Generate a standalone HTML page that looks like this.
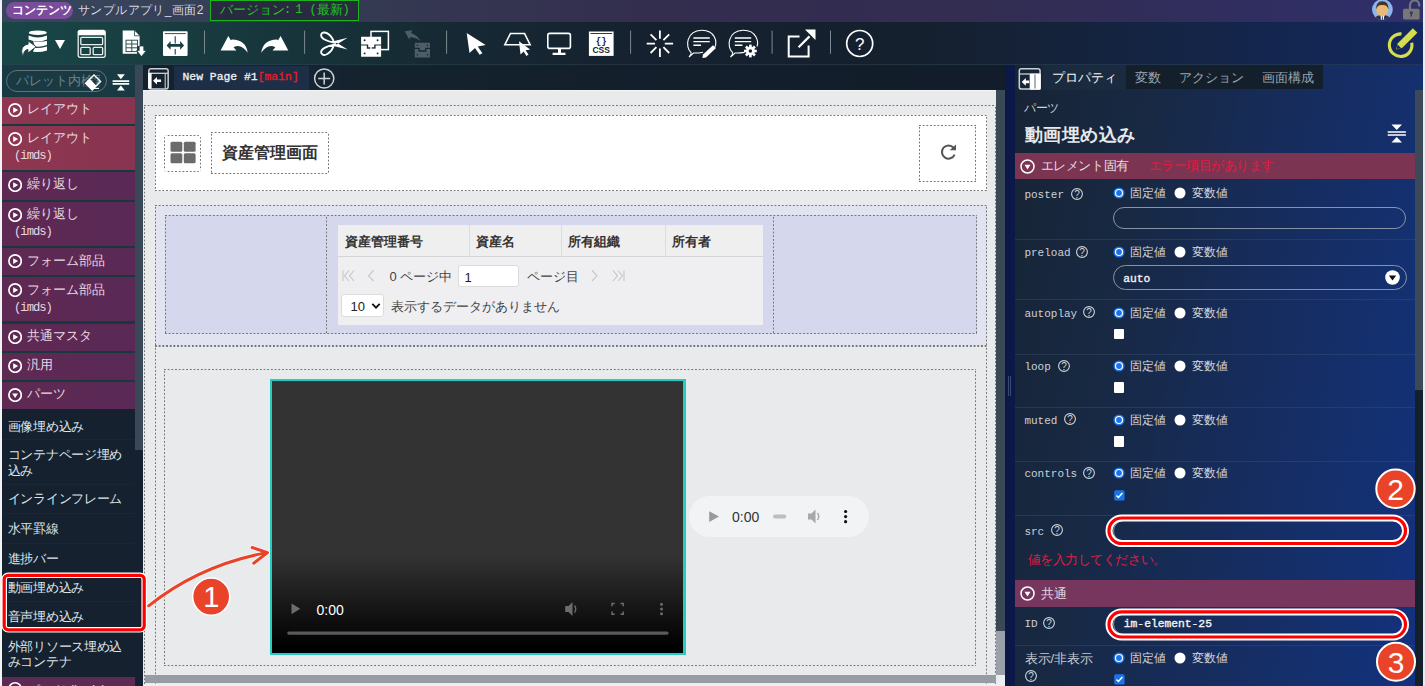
<!DOCTYPE html>
<html><head><meta charset="utf-8">
<style>
*{box-sizing:border-box;margin:0;padding:0}
html,body{width:1425px;height:686px;overflow:hidden;background:#e8eaec}
body{position:relative;font-family:"Liberation Sans",sans-serif;font-size:13px;color:#ddd}
.abs{position:absolute}
.mono{font-family:"Liberation Mono",monospace}
#topbar{left:0;top:0;width:1425px;height:22px;background:linear-gradient(90deg,#37475d 0%,#353c53 22%,#332e4e 45%,#322d52 70%,#302e62 90%,#2f2f6c 100%)}
#toolbar{left:0;top:22px;width:1425px;height:43px;background:linear-gradient(90deg,#194646 0%,#183a3e 15%,#162a34 30%,#15212f 45%,#15202f 65%,#142548 85%,#13285f 100%)}
#lefttop{left:0;top:65px;width:135px;height:31px;background:#1a3b44}
#sidebar{left:0;top:96px;width:135px;height:590px;background:#15212e}
#sbscroll{left:135px;top:65px;width:8px;height:621px;background:#152030}
#tabbar{left:143px;top:65px;width:862px;height:25px;background:linear-gradient(90deg,#14222d 0%,#14232e 25%,#13202c 55%,#121c2a 100%)}
#canvas{left:143px;top:90px;width:862px;height:596px;background:#e9eaec}
#navy{left:1005px;top:65px;width:10px;height:621px;background:#0b1848}
#rp{left:1015px;top:65px;width:410px;height:621px;background:linear-gradient(100deg,#172435 0%,#182944 28%,#162c5c 55%,#14306f 80%,#133180 100%)}
.t{position:absolute;white-space:nowrap;line-height:1}
.item{position:absolute;left:2px;width:133px;color:#e6d6dc;font-size:13px}
.dot{position:absolute;background-image:linear-gradient(90deg,#747474 40%,transparent 40%),linear-gradient(90deg,#747474 40%,transparent 40%),linear-gradient(0deg,#747474 40%,transparent 40%),linear-gradient(0deg,#747474 40%,transparent 40%);background-size:3.7px 1px,3.7px 1px,1px 3.7px,1px 3.7px;background-position:0 0,0 100%,0 0,100% 0;background-repeat:repeat-x,repeat-x,repeat-y,repeat-y}
</style></head><body>
<div id="topbar" class="abs"></div>
<div id="toolbar" class="abs"></div>
<div id="lefttop" class="abs"></div>
<div id="sidebar" class="abs"></div>
<div id="sbscroll" class="abs"></div>
<div id="tabbar" class="abs"></div>
<div id="canvas" class="abs"></div>
<div id="navy" class="abs"></div>
<div id="rp" class="abs"></div>
<div class="abs" style="left:0;top:0;width:2px;height:686px;background:#f2f3f5"></div>
<div class="abs" style="left:6px;top:2px;width:67px;height:17px;border-radius:9px;background:#7b4b9c"></div>
<div class="t" style="left:11.5px;top:4px;font-size:11.6px;font-weight:bold;color:#fff">コンテンツ</div>
<div class="t" style="left:78px;top:3.8px;font-size:12px;letter-spacing:0.4px;color:#d6d8e2">サンプルアプリ_画面2</div>
<div class="abs" style="left:210px;top:0;width:149px;height:21px;border:1px solid #1cb41c;background:#282b40"></div>
<div class="t" style="left:220px;top:3.5px;font-size:12.8px;color:#22c422">バージョン</div><div class="t mono" style="left:284px;top:4px;font-size:12px;color:#22c422">:</div><div class="t mono" style="left:295.3px;top:4px;font-size:12px;color:#22c422">1</div><div class="t mono" style="left:309.5px;top:3.5px;font-size:12px;color:#22c422">(</div><div class="t" style="left:317px;top:3.5px;font-size:12.5px;color:#22c422">最新</div><div class="t mono" style="left:342.5px;top:3.5px;font-size:12px;color:#22c422">)</div>
<div class="abs" style="left:2px;top:64px;width:1420px;height:1px;background:rgba(45,68,84,0.55)"></div><!--toolbar-line-->
<svg class="abs" style="left:0;top:0" width="1425" height="65" viewBox="0 0 1425 65">
<g fill="#fff" stroke="none">
<!-- DB icon -->
<ellipse cx="37.8" cy="32.7" rx="9" ry="2.3"/>
<path d="M28.6 35.6 Q37.8 39.5 47 35.6 V39.6 Q37.8 43.4 28.6 39.6Z"/>
<path d="M33 41.2 Q40 42.5 47 41 V45 Q40 47.5 35 46.5Z"/>
<path d="M34.5 48 Q40 48.5 47 46.6 V50.6 Q40 52.8 33 51.8Z"/>
<path d="M28.2 40.9 L36.2 46.8 L27.9 53 L28 49.5 C25.5 49.5 24 51.5 23.1 56 C20.6 52 21 45.2 28.1 44.2Z" stroke="#174444" stroke-width="0.9"/>
<path d="M55 40 H65 L60 49Z"/>
</g>
<!-- layout icon -->
<g fill="none" stroke="#e8efee" stroke-width="1.3">
<rect x="78.2" y="30.3" width="27" height="27" rx="2"/>
<rect x="80.8" y="37.3" width="21.8" height="7.4" rx="1"/>
<rect x="80.8" y="47.3" width="9.4" height="7.4" rx="1"/>
<rect x="93.2" y="47.3" width="9.4" height="7.4" rx="1"/>
</g>
<path d="M78.2 32.3 a2 2 0 0 1 2-2 h23 a2 2 0 0 1 2 2 v3 h-27z" fill="#fff"/>
<!-- doc icon -->
<path d="M122.7 30.6 H134.5 L139.6 35.8 V46 H137 V53.8 H122.7Z" fill="#fff"/>
<path d="M134.5 30.6 V35.8 H139.6" fill="none" stroke="#174444" stroke-width="0.8"/>
<g stroke="#174444" stroke-width="0.9" fill="none">
<rect x="126" y="40.2" width="11.6" height="11.4"/>
<path d="M131.8 40.2 V51.6 M126 44 H137.6 M126 47.8 H137.6"/>
</g>
<path d="M139.2 46 H143.8 V50.5 H146.4 L141.5 56.6 L136.6 50.5 H139.2Z" fill="#fff" stroke="#174444" stroke-width="0.8"/>
<!-- split icon -->
<rect x="163" y="31.2" width="24.6" height="24.7" rx="0.8" fill="#fff"/>
<path d="M164.8 33.6 H185.8" stroke="#17403f" stroke-width="0.9"/>
<path d="M175.2 36.2 V43.4 M175.2 49 V54.6" stroke="#17403f" stroke-width="1.1"/>
<path d="M166.6 45.4 L170.6 41 V44 H180.1 V41 L184.1 45.4 L180.1 49.8 V46.8 H170.6 V49.8Z" fill="#17403f"/>
<!-- separators -->
<g stroke="#7a8a90" stroke-width="1">
<path d="M204.5 30.6 V53.8 M304.6 30.6 V53.8 M446.6 30.6 V53.8 M630.6 30.6 V53.8 M772.1 30.6 V53.8 M830.5 30.6 V53.8"/>
</g>
<!-- undo -->
<path d="M228.3 35.9 L220.6 50.6 H236.4 L233.5 47.2 Q241 43 247.6 52.7 Q246 40 232 39.6 L230.8 40.2Z" fill="#fff"/>
<!-- redo -->
<path d="M280.6 35.9 L288.3 50.6 H272.5 L275.4 47.2 Q267.9 43 261.3 52.7 Q262.9 40 276.9 39.6 L278.1 40.2Z" fill="#fff"/>
<!-- scissors -->
<g fill="none" stroke="#fff" stroke-width="1.9">
<path d="M334 42.6 C331.5 33.5 323 30 321.3 34.2 C320 38.5 327 41.2 334 42.6Z"/>
<path d="M334 44.8 C331.5 53.9 323 57.4 321.3 53.2 C320 48.9 327 46.2 334 44.8Z"/>
</g>
<path d="M332.5 41.6 L347.6 37.8 L336.8 44.6Z M332.5 45.8 L347.6 49.6 L336.8 42.8Z" fill="#fff"/>
<!-- copy -->
<rect x="371" y="31.4" width="17.4" height="18.2" fill="none" stroke="#fff" stroke-width="1.5"/>
<path d="M361.1 36.8 H381.1 V44.4 H374.2 V47.2 H368.2 V44.4 H361.1Z M361.1 45.6 H366.8 V48.8 H375.6 V45.6 H381.1 V56.8 H361.1Z" fill="#fff"/>
<g fill="#17222e"><circle cx="364.6" cy="40.2" r="0.95"/><circle cx="377.6" cy="40.2" r="0.95"/><circle cx="364.6" cy="53.4" r="0.95"/><circle cx="377.6" cy="53.4" r="0.95"/></g>
<!-- paste disabled -->
<path d="M404.7 31.2 L412.3 30.2 L411.2 33 Q417.8 35.8 420.6 40.8 Q416 37.8 410.4 37 L409.2 39.4Z" fill="#4d5d6a"/>
<path d="M414.8 42.7 H430 V47.8 H425 V50.2 H419.8 V47.8 H414.8Z M414.8 49 H418.4 V51.8 H426.4 V49 H430 V57.4 H414.8Z" fill="#4d5d6a"/>
<g fill="#17222e"><circle cx="417.4" cy="45.2" r="0.8"/><circle cx="427.4" cy="45.2" r="0.8"/><circle cx="417.4" cy="54.8" r="0.8"/><circle cx="427.4" cy="54.8" r="0.8"/></g>
<!-- pointer -->
<path d="M466.7 32.9 L485.6 45 L477.8 46.4 L482.4 53.2 L479.6 54.8 L475 48 L469.5 53Z" fill="#fff"/>
<!-- trapezoid pointer -->
<path d="M510.4 33.6 H524.6 L530.2 44.8 H504.8Z" fill="none" stroke="#fff" stroke-width="1.5"/>
<path d="M519 41.3 L530.2 49.5 L525.6 50.2 L528.5 54.4 L526.4 55.9 L523.6 51.5 L520.5 54.6Z" fill="#fff"/>
<!-- monitor -->
<rect x="547.8" y="33.4" width="22.6" height="15" rx="2" fill="none" stroke="#fff" stroke-width="1.6"/>
<path d="M558 48.6 H561 V52.8 H558Z M552.6 52.8 H565.5 V55.1 H552.6Z" fill="#fff"/>
<!-- css -->
<rect x="588.9" y="31.5" width="24.7" height="24.4" fill="#fff"/>
<path d="M590.4 33.5 H612.1" stroke="#17222e" stroke-width="0.9"/>
<text x="601.2" y="44.4" font-family="Liberation Mono" font-weight="bold" font-size="9.5" fill="#17222e" text-anchor="middle" textLength="11" lengthAdjust="spacingAndGlyphs">{}</text>
<text x="601.2" y="53.4" font-family="Liberation Sans" font-weight="bold" font-size="8.4" fill="#17222e" text-anchor="middle" textLength="17.5" lengthAdjust="spacingAndGlyphs">CSS</text>
<!-- spinner -->
<g stroke="#fff" stroke-width="1.8" stroke-linecap="butt">
<path d="M659.9 30.5 V38.8 M659.9 48.6 V56.9 M646.7 43.7 H655 M664.8 43.7 H673.1 M650.6 34.4 L656.4 40.2 M663.4 47.2 L669.2 53 M669.2 34.4 L663.4 40.2 M656.4 47.2 L650.6 53"/>
</g>
<!-- chat pen -->
<path d="M691 52.5 C685 47 686 31 701.5 30.2 C716 30 717 43 714.8 47 M703 52.2 C699 53 696 53.2 693.5 53 L689 57 C690.5 55 691.5 53 691 52.5" fill="none" stroke="#fff" stroke-width="1.1"/>
<g stroke="#fff" stroke-width="1.4"><path d="M693.4 38 H709.8 M693.4 41.6 H709.8 M693.4 45.2 H701"/></g>
<path d="M713 45.2 L716 48 L706 57.5 L702.4 58 L703 54.6Z" fill="#fff"/>
<!-- chat gear -->
<path d="M732.5 52.5 C726.5 47 727.5 31 743 30.2 C757.5 30 758.5 43 757 46.5 M744.5 52.4 C740.5 53 737.5 53.2 735 53 L730.5 57 C732 55 733 53 732.5 52.5" fill="none" stroke="#fff" stroke-width="1.1"/>
<g stroke="#fff" stroke-width="1.4"><path d="M734.8 38 H751.2 M734.8 41.6 H751.2 M734.8 45.2 H742.4"/></g>
<g transform="translate(750.4 51)">
<circle r="4.4" fill="#fff"/>
<g fill="#fff"><rect x="-1.3" y="-6.4" width="2.6" height="12.8"/><rect x="-1.3" y="-6.4" width="2.6" height="12.8" transform="rotate(45)"/><rect x="-1.3" y="-6.4" width="2.6" height="12.8" transform="rotate(90)"/><rect x="-1.3" y="-6.4" width="2.6" height="12.8" transform="rotate(135)"/></g>
<circle r="1.8" fill="#17222e"/>
</g>
<!-- external -->
<path d="M799.5 36.5 H788.7 V56.4 H808.6 V45.5" fill="none" stroke="#fff" stroke-width="2"/>
<path d="M798.6 47.3 L809.5 36.4" stroke="#fff" stroke-width="2.2"/>
<path d="M805 29.6 H815.5 V40.1Z" fill="#fff"/>
<!-- help -->
<circle cx="859.7" cy="43.5" r="13" fill="none" stroke="#fff" stroke-width="1.7"/>
<text x="859.7" y="49.5" font-family="Liberation Sans" font-size="17" fill="#fff" text-anchor="middle">?</text>
<!-- edit icon right -->
<path d="M1401.5 33.9 A11.3 11.3 0 1 0 1411.7 42.8" fill="none" stroke="#d5dc4e" stroke-width="3.1"/>
<path d="M1396.2 49.5 L1397.8 43.3 L1412.9 28.2 L1417.4 32.7 L1402.3 47.8Z" fill="#d5dc4e"/>
<path d="M1397.6 44.6 L1401.2 48.2 L1396.8 49Z" fill="#112a5a"/>
</svg>
<div class="abs" style="left:2px;top:65px;width:133px;height:31px;background:#1a3a43"></div>
<div class="abs" style="left:6px;top:70px;width:101px;height:21.5px;border:1px solid #5f7378;border-radius:11px"></div>
<div class="abs" style="left:8px;top:70px;width:92px;height:21px;overflow:hidden"><div class="t" style="left:8px;top:3.5px;font-size:13px;color:#6f8286">パレット内検索</div></div>
<svg class="abs" style="left:84px;top:73px" width="18" height="18" viewBox="0 0 18 18"><path d="M1.6 10.3 L10 1.9 L16.6 8.5 L8.2 16.9Z" fill="none" stroke="#fff" stroke-width="1.4"/><path d="M1.6 10.3 L5.8 6.1 L12.4 12.7 L8.2 16.9Z" fill="#fff"/><path d="M7.8 15.4 H15" stroke="#fff" stroke-width="1.1"/></svg>
<svg class="abs" style="left:111.5px;top:73.5px" width="18" height="17" viewBox="0 0 18 17"><path d="M5 0.3 H12.8 L8.9 5.2Z M5 16.6 H12.8 L8.9 11.6Z" fill="#fff"/><path d="M0.6 7.2 H17.2 M0.6 9.9 H17.2" stroke="#fff" stroke-width="1.7"/></svg>
<div class="abs" style="left:2px;top:96px;width:133px;height:313px;background:#17393e"></div>
<div class="abs" style="left:2px;top:96.5px;width:132.5px;height:27.2px;background:linear-gradient(90deg,#8f3750,#883450)"></div>
<svg class="abs" style="left:8px;top:102.5px" width="14.2" height="14.2" viewBox="0 0 14.2 14.2"><circle cx="7.1" cy="7.1" r="6.2" fill="none" stroke="#fff" stroke-width="1.7"/><path d="M5.2 4.2 L10.2 7.1 L5.2 10Z" fill="#fff"/></svg>
<div class="t" style="left:27px;top:101.9px;font-size:13px;color:#ead8e0">レイアウト</div>
<div class="abs" style="left:2px;top:125.8px;width:132.5px;height:44.4px;background:linear-gradient(90deg,#8f3750,#883450)"></div>
<svg class="abs" style="left:8px;top:131.8px" width="14.2" height="14.2" viewBox="0 0 14.2 14.2"><circle cx="7.1" cy="7.1" r="6.2" fill="none" stroke="#fff" stroke-width="1.7"/><path d="M5.2 4.2 L10.2 7.1 L5.2 10Z" fill="#fff"/></svg>
<div class="t" style="left:27px;top:131.2px;font-size:13px;color:#ead8e0">レイアウト</div>
<div class="t mono" style="left:14px;top:150.4px;font-size:12.2px;letter-spacing:-1px;color:#ead8e0">(imds)</div>
<div class="abs" style="left:2px;top:172px;width:132.5px;height:27.8px;background:linear-gradient(90deg,#5f2953,#5a2956)"></div>
<svg class="abs" style="left:8px;top:178.0px" width="14.2" height="14.2" viewBox="0 0 14.2 14.2"><circle cx="7.1" cy="7.1" r="6.2" fill="none" stroke="#fff" stroke-width="1.7"/><path d="M5.2 4.2 L10.2 7.1 L5.2 10Z" fill="#fff"/></svg>
<div class="t" style="left:27px;top:177.4px;font-size:13px;color:#ead8e0">繰り返し</div>
<div class="abs" style="left:2px;top:201.8px;width:132.5px;height:44.4px;background:linear-gradient(90deg,#5f2953,#5a2956)"></div>
<svg class="abs" style="left:8px;top:207.8px" width="14.2" height="14.2" viewBox="0 0 14.2 14.2"><circle cx="7.1" cy="7.1" r="6.2" fill="none" stroke="#fff" stroke-width="1.7"/><path d="M5.2 4.2 L10.2 7.1 L5.2 10Z" fill="#fff"/></svg>
<div class="t" style="left:27px;top:207.2px;font-size:13px;color:#ead8e0">繰り返し</div>
<div class="t mono" style="left:14px;top:226.4px;font-size:12.2px;letter-spacing:-1px;color:#ead8e0">(imds)</div>
<div class="abs" style="left:2px;top:248.3px;width:132.5px;height:27.0px;background:linear-gradient(90deg,#5f2953,#5a2956)"></div>
<svg class="abs" style="left:8px;top:254.3px" width="14.2" height="14.2" viewBox="0 0 14.2 14.2"><circle cx="7.1" cy="7.1" r="6.2" fill="none" stroke="#fff" stroke-width="1.7"/><path d="M5.2 4.2 L10.2 7.1 L5.2 10Z" fill="#fff"/></svg>
<div class="t" style="left:27px;top:253.7px;font-size:13px;color:#ead8e0">フォーム部品</div>
<div class="abs" style="left:2px;top:277.3px;width:132.5px;height:44.2px;background:linear-gradient(90deg,#5f2953,#5a2956)"></div>
<svg class="abs" style="left:8px;top:283.3px" width="14.2" height="14.2" viewBox="0 0 14.2 14.2"><circle cx="7.1" cy="7.1" r="6.2" fill="none" stroke="#fff" stroke-width="1.7"/><path d="M5.2 4.2 L10.2 7.1 L5.2 10Z" fill="#fff"/></svg>
<div class="t" style="left:27px;top:282.7px;font-size:13px;color:#ead8e0">フォーム部品</div>
<div class="t mono" style="left:14px;top:301.9px;font-size:12.2px;letter-spacing:-1px;color:#ead8e0">(imds)</div>
<div class="abs" style="left:2px;top:323.5px;width:132.5px;height:27.5px;background:linear-gradient(90deg,#5f2953,#5a2956)"></div>
<svg class="abs" style="left:8px;top:329.5px" width="14.2" height="14.2" viewBox="0 0 14.2 14.2"><circle cx="7.1" cy="7.1" r="6.2" fill="none" stroke="#fff" stroke-width="1.7"/><path d="M5.2 4.2 L10.2 7.1 L5.2 10Z" fill="#fff"/></svg>
<div class="t" style="left:27px;top:328.9px;font-size:13px;color:#ead8e0">共通マスタ</div>
<div class="abs" style="left:2px;top:353px;width:132.5px;height:27.0px;background:linear-gradient(90deg,#5f2953,#5a2956)"></div>
<svg class="abs" style="left:8px;top:359.0px" width="14.2" height="14.2" viewBox="0 0 14.2 14.2"><circle cx="7.1" cy="7.1" r="6.2" fill="none" stroke="#fff" stroke-width="1.7"/><path d="M5.2 4.2 L10.2 7.1 L5.2 10Z" fill="#fff"/></svg>
<div class="t" style="left:27px;top:358.4px;font-size:13px;color:#ead8e0">汎用</div>
<div class="abs" style="left:2px;top:382px;width:132.5px;height:27.0px;background:linear-gradient(90deg,#5f2953,#5a2956)"></div>
<svg class="abs" style="left:8px;top:388.0px" width="14.2" height="14.2" viewBox="0 0 14.2 14.2"><circle cx="7.1" cy="7.1" r="6.2" fill="none" stroke="#fff" stroke-width="1.7"/><path d="M4.2 5.4 L10 5.4 L7.1 10Z" fill="#fff"/></svg>
<div class="t" style="left:27px;top:387.4px;font-size:13px;color:#ead8e0">パーツ</div>
<div class="t" style="left:7.8px;top:419.5px;font-size:13px;letter-spacing:-0.3px;color:#dfe3ea">画像埋め込み</div>
<div class="t" style="left:7.8px;top:448.0px;font-size:13px;letter-spacing:-0.3px;color:#dfe3ea">コンテナページ埋め</div>
<div class="t" style="left:7.8px;top:463.5px;font-size:13px;letter-spacing:-0.3px;color:#dfe3ea">込み</div>
<div class="t" style="left:7.8px;top:492.0px;font-size:13px;letter-spacing:-0.3px;color:#dfe3ea">インラインフレーム</div>
<div class="t" style="left:7.8px;top:522.0px;font-size:13px;letter-spacing:-0.3px;color:#dfe3ea">水平罫線</div>
<div class="t" style="left:7.8px;top:551.5px;font-size:13px;letter-spacing:-0.3px;color:#dfe3ea">進捗バー</div>
<div class="t" style="left:7.8px;top:581.0px;font-size:13px;letter-spacing:-0.3px;color:#dfe3ea">動画埋め込み</div>
<div class="t" style="left:7.8px;top:610.0px;font-size:13px;letter-spacing:-0.3px;color:#dfe3ea">音声埋め込み</div>
<div class="t" style="left:7.8px;top:639.5px;font-size:13px;letter-spacing:-0.3px;color:#dfe3ea">外部リソース埋め込</div>
<div class="t" style="left:7.8px;top:655.0px;font-size:13px;letter-spacing:-0.3px;color:#dfe3ea">みコンテナ</div>
<div class="abs" style="left:2px;top:439.4px;width:133px;height:1px;background:rgba(255,255,255,0.025)"></div>
<div class="abs" style="left:2px;top:484px;width:133px;height:1px;background:rgba(255,255,255,0.025)"></div>
<div class="abs" style="left:2px;top:513.4px;width:133px;height:1px;background:rgba(255,255,255,0.025)"></div>
<div class="abs" style="left:2px;top:542.8px;width:133px;height:1px;background:rgba(255,255,255,0.025)"></div>
<div class="abs" style="left:2px;top:572px;width:133px;height:1px;background:rgba(255,255,255,0.025)"></div>
<div class="abs" style="left:2px;top:601px;width:133px;height:1px;background:rgba(255,255,255,0.025)"></div>
<div class="abs" style="left:2px;top:630px;width:133px;height:1px;background:rgba(255,255,255,0.025)"></div>
<div class="abs" style="left:2px;top:676.7px;width:132.5px;height:12px;background:#5c2a55"></div>
<svg class="abs" style="left:8px;top:682.4px" width="14.2" height="14.2" viewBox="0 0 14.2 14.2"><circle cx="7.1" cy="7.1" r="6.3" fill="none" stroke="#fff" stroke-width="1.5"/></svg>
<div class="t" style="left:27px;top:682.5px;font-size:13px;color:#ead8e0">パーツ (imds)</div>
<div class="abs" style="left:135px;top:65px;width:8px;height:384.5px;background:#394756"></div>
<!-- tab bar -->
<svg class="abs" style="left:147px;top:67px" width="23" height="23" viewBox="0 0 23 23">
<rect x="1.85" y="1.65" width="19.3" height="20.3" rx="2.2" fill="none" stroke="#cdd1d6" stroke-width="1.5"/>
<path d="M1.85 6.3 H21.15" stroke="#cdd1d6" stroke-width="1.3"/>
<rect x="1.1" y="6" width="3.5" height="15.6" fill="#fff"/>
<path d="M18.2 6.3 V21.4" stroke="#c8ccd2" stroke-width="1.1"/>
<path d="M6 13.8 L10 10 V12.5 H14.1 V15.1 H10 V17.6Z" fill="#fff"/>
</svg>
<div class="abs" style="left:173.7px;top:65.5px;width:135.4px;height:24px;background:#1d2f47"></div>
<div class="t mono" style="left:182.5px;top:71.8px;font-size:11.4px;color:#f2f2f2;-webkit-text-stroke:0.3px #f2f2f2">New Page #1<span style="color:#e4202a;-webkit-text-stroke:0.3px #e4202a">[main]</span></div>
<div class="abs" style="left:309px;top:65.5px;width:31px;height:24px;background:#152430"></div>
<svg class="abs" style="left:313px;top:67px" width="23" height="23" viewBox="0 0 23 23"><circle cx="11.2" cy="11.5" r="9.6" fill="none" stroke="#cdd2d8" stroke-width="1.5"/><path d="M11.2 5.5 V17.5 M5.2 11.5 H17.2" stroke="#cdd2d8" stroke-width="1.5"/></svg>
<!-- canvas -->
<div class="abs" style="left:143px;top:90px;width:853px;height:1.2px;background:#f4f5f6"></div>
<div class="dot" style="left:144px;top:104.8px;width:851.5px;height:580px;background-color:transparent"></div>
<!-- header -->
<div class="dot" style="left:154.7px;top:115px;width:832.3px;height:76.4px;background-color:#fff"></div>
<div class="dot" style="left:164.3px;top:134.5px;width:37px;height:37.3px;border-radius:4px"></div>
<svg class="abs" style="left:170px;top:141px" width="27" height="23" viewBox="0 0 27 23">
<g fill="#6b6b6b"><rect x="0.5" y="0.7" width="11.8" height="10" rx="1.5"/><rect x="13.8" y="0.7" width="11.8" height="10" rx="1.5"/><rect x="0.5" y="12.3" width="11.8" height="10" rx="1.5"/><rect x="13.8" y="12.3" width="11.8" height="10" rx="1.5"/></g></svg>
<div class="dot" style="left:210.7px;top:132px;width:118.3px;height:42px"></div>
<div class="t" style="left:221.5px;top:145px;font-size:16px;font-weight:bold;color:#333">資産管理画面</div>
<div class="dot" style="left:919.3px;top:124.6px;width:57.2px;height:57px"></div>
<svg class="abs" style="left:938px;top:142px" width="20" height="20" viewBox="0 0 20 20"><path d="M15.6 5.8 A6.6 6.6 0 1 0 16.6 12.6" fill="none" stroke="#555" stroke-width="2"/><path d="M11.6 8.3 H18 V2.4Z" fill="#555"/></svg>
<!-- table section -->
<div class="dot" style="left:155px;top:204.9px;width:832px;height:141px;background-color:#e1e3f0"></div>
<div class="dot" style="left:164.5px;top:215.4px;width:812px;height:118.8px;background-color:#d5d8ed"></div>
<div class="dot" style="left:326px;top:215.4px;width:447.5px;height:118.8px;background-image:linear-gradient(0deg,#747474 40%,transparent 40%),linear-gradient(0deg,#747474 40%,transparent 40%);background-size:1px 3.7px,1px 3.7px;background-position:0 0,100% 0;background-repeat:repeat-y,repeat-y"></div>
<div class="abs" style="left:337.8px;top:225px;width:425px;height:99.8px;background:#efeff1"></div>
<div class="abs" style="left:337.8px;top:225px;width:425px;height:32px;background:#efefef;border-bottom:1.2px solid #d4d4d6"></div>
<div class="abs" style="left:469px;top:225px;width:1px;height:32px;background:#dcdcde"></div>
<div class="abs" style="left:561px;top:225px;width:1px;height:32px;background:#dcdcde"></div>
<div class="abs" style="left:665px;top:225px;width:1px;height:32px;background:#dcdcde"></div>
<div class="t" style="left:344.6px;top:234.5px;font-size:13px;font-weight:bold;color:#333">資産管理番号</div>
<div class="t" style="left:476px;top:234.5px;font-size:13px;font-weight:bold;color:#333">資産名</div>
<div class="t" style="left:568.2px;top:234.5px;font-size:13px;font-weight:bold;color:#333">所有組織</div>
<div class="t" style="left:672.4px;top:234.5px;font-size:13px;font-weight:bold;color:#333">所有者</div>
<svg class="abs" style="left:340px;top:268px" width="290" height="16" viewBox="0 0 290 16">
<g fill="none" stroke="#c6c6ca" stroke-width="1.1">
<path d="M3 2.5 V13 M9 2.5 L4.5 7.8 L9 13 M14 2.5 L9.5 7.8 L14 13"/>
<path d="M33.5 2.5 L28.5 7.8 L33.5 13"/>
<path d="M252 2.5 L257 7.8 L252 13"/>
<path d="M273 2.5 L277.5 7.8 L273 13 M278 2.5 L282.5 7.8 L278 13 M284 2.5 V13"/>
</g></svg>
<div class="t" style="left:389.5px;top:270px;font-size:13px;color:#444">0 ページ中</div>
<div class="abs" style="left:457.8px;top:264.5px;width:61.3px;height:22.8px;background:#fff;border:1px solid #dcdcdc;border-radius:3px"></div>
<div class="t" style="left:464.5px;top:270.5px;font-size:13px;color:#222">1</div>
<div class="t" style="left:526.6px;top:270px;font-size:13px;color:#444">ページ目</div>
<div class="abs" style="left:340.6px;top:293.6px;width:43.2px;height:23.9px;background:#fff;border:1px solid #dcdcdc;border-radius:3px"></div>
<div class="t" style="left:350.5px;top:300px;font-size:13px;color:#222">10</div>
<svg class="abs" style="left:371px;top:302px" width="10" height="8" viewBox="0 0 10 8"><path d="M1.3 1.8 L5 5.6 L8.7 1.8" fill="none" stroke="#111" stroke-width="1.8"/></svg>
<div class="t" style="left:390.9px;top:299.5px;font-size:13px;color:#444">表示するデータがありません</div>
<!-- video section -->
<div class="dot" style="left:155px;top:345.8px;width:831.6px;height:340px"></div>
<div class="dot" style="left:164.2px;top:368.7px;width:811.7px;height:297.1px"></div>
<div class="abs" style="left:269.7px;top:378.8px;width:416.2px;height:276.5px;background:#1fd0c2"></div>
<div class="abs" style="left:272.2px;top:381.2px;width:411.2px;height:271.5px;background:linear-gradient(180deg,#333 0%,#333 64%,#000 98%)"></div>
<svg class="abs" style="left:272px;top:595px" width="412" height="45" viewBox="0 0 412 45">
<path d="M19.5 8.4 L28.3 13.8 L19.5 19.2Z" fill="#6c6c6c"/>
<rect x="15.2" y="36.4" width="381.4" height="3.4" rx="1.7" fill="#5a5a5a"/>
<path d="M293.2 11 H296.5 L300.5 7 V21 L296.5 17 H293.2Z" fill="#6c6c6c"/>
<path d="M302.5 10.5 Q305 14 302.5 17.5" fill="none" stroke="#6c6c6c" stroke-width="1.4"/>
<path d="M340 11.3 V8.5 H342.8 M348.5 8.5 H351.2 V11.3 M351.2 16.6 V19.3 H348.5 M342.8 19.3 H340 V16.6" fill="none" stroke="#6c6c6c" stroke-width="1.5"/>
<g fill="#6c6c6c"><circle cx="389.5" cy="9.2" r="1.5"/><circle cx="389.5" cy="14" r="1.5"/><circle cx="389.5" cy="18.8" r="1.5"/></g>
</svg>
<div class="t" style="left:316.5px;top:603px;font-size:14px;color:#fff">0:00</div>
<div class="abs" style="left:688.5px;top:496.3px;width:180.2px;height:40.9px;background:#f1f3f4;border-radius:20.5px"></div>
<svg class="abs" style="left:688.5px;top:496.3px" width="181" height="41" viewBox="0 0 181 41">
<path d="M20.2 15.2 L30 20.6 L20.2 26Z" fill="#9a9a9a"/>
<rect x="84" y="18.6" width="13.2" height="4" rx="2" fill="#bdbdbd"/>
<path d="M119 17.5 H122.5 L126.5 13.5 V27.5 L122.5 23.5 H119Z" fill="#a8a8a8"/>
<path d="M128.5 17 Q131 20.5 128.5 24" fill="none" stroke="#a8a8a8" stroke-width="1.4"/>
<g fill="#111"><circle cx="156.6" cy="15.5" r="1.6"/><circle cx="156.6" cy="20.6" r="1.6"/><circle cx="156.6" cy="25.7" r="1.6"/></g>
</svg>
<div class="t" style="left:732px;top:510px;font-size:14px;color:#333">0:00</div>
<!-- canvas scrollbars -->
<div class="abs" style="left:996.3px;top:90px;width:8.7px;height:541px;background:#3b4856"></div>
<div class="abs" style="left:996.3px;top:631px;width:8.7px;height:44px;background:#9aa1a9"></div>
<div class="abs" style="left:996.3px;top:675px;width:8.7px;height:8.5px;background:#ecedef"></div>
<div class="abs" style="left:144.5px;top:675.3px;width:851.8px;height:8.2px;background:#959ca4"></div>
<div class="abs" style="left:143px;top:683.5px;width:862px;height:2.5px;background:#eceef0"></div>
<svg class="abs" style="left:1017.6px;top:67.8px" width="23" height="23" viewBox="0 0 23 23"><rect x="1.3" y="0.8" width="20.8" height="20.3" rx="2.2" fill="none" stroke="#cdd1d6" stroke-width="1.5"/><path d="M1.3 6 H22.1" stroke="#cdd1d6" stroke-width="1.3"/><rect x="11.7" y="5.8" width="11.1" height="16" rx="1" fill="#fff"/><path d="M17 6.5 V20.6" stroke="#8a929c" stroke-width="1.4"/><path d="M3.7 13.9 L7.8 10 V12.5 H11.2 V15.3 H7.8 V17.8Z" fill="#fff"/></svg>
<div class="abs" style="left:1043px;top:65px;width:82.6px;height:25px;background:#1b2b3f"></div>
<div class="t" style="left:1052px;top:70.5px;font-size:13px;color:#f4f4f4">プロパティ</div>
<div class="abs" style="left:1126px;top:65.4px;width:197px;height:24.1px;background:#141f2c"></div>
<div class="t" style="left:1135px;top:70.5px;font-size:13px;color:#9ba5b0">変数</div>
<div class="t" style="left:1179.2px;top:70.5px;font-size:13px;color:#9ba5b0">アクション</div>
<div class="t" style="left:1262px;top:70.5px;font-size:13px;color:#9ba5b0">画面構成</div>
<div class="t" style="left:1024.3px;top:102px;font-size:12px;letter-spacing:-0.6px;color:#d0d4da">パーツ</div>
<div class="t" style="left:1024.5px;top:125.5px;font-size:18px;letter-spacing:0.5px;font-weight:bold;color:#e8e8ea">動画埋め込み</div>
<svg class="abs" style="left:1387px;top:124px" width="20" height="19" viewBox="0 0 20 19"><path d="M4.5 0.5 H15 L9.75 6Z M4.5 18.5 H15 L9.75 13Z" fill="#fff"/><path d="M0.7 8 H18.9 M0.7 11 H18.9" stroke="#fff" stroke-width="1.6"/></svg>
<div class="abs" style="left:1015px;top:153px;width:400px;height:26.3px;background:#7b3451"></div>
<svg class="abs" style="left:1019.8px;top:158.6px" width="15" height="15" viewBox="0 0 15 15"><circle cx="7.5" cy="7.5" r="6.5" fill="none" stroke="#fff" stroke-width="1.5"/><path d="M4.5 5.7 L10.5 5.7 L7.5 10.5Z" fill="#fff"/></svg>
<div class="t" style="left:1040.5px;top:158.5px;font-size:13px;letter-spacing:-0.35px;color:#e0dce0">エレメント固有</div>
<div class="t" style="left:1148.5px;top:158.5px;font-size:13px;letter-spacing:-0.45px;color:#e41a40">エラー項目があります</div>
<div class="t mono" style="left:1024.4px;top:190.0px;font-size:11px;color:#ccd0d8">poster</div><svg class="abs" style="left:1070.7px;top:187.7px" width="12" height="12" viewBox="0 0 12 12"><circle cx="6" cy="6" r="5.4" fill="none" stroke="#d0d4da" stroke-width="1.1"/><text x="6" y="9.6" font-family="Liberation Sans" font-size="10" fill="#d0d4da" text-anchor="middle">?</text></svg>
<svg class="abs" style="left:1112.7px;top:187.4px" width="12" height="12" viewBox="0 0 12 12"><circle cx="6" cy="6" r="5.6" fill="#1a73e8"/><circle cx="6" cy="6" r="4.1" fill="#fff"/><circle cx="6" cy="6" r="2.9" fill="#1a73e8"/></svg><div class="t" style="left:1130.3px;top:187.4px;font-size:12.2px;color:#d2d6dc">固定値</div><svg class="abs" style="left:1174.3px;top:187.4px" width="12" height="12" viewBox="0 0 12 12"><circle cx="6" cy="6" r="5.5" fill="#fff"/></svg><div class="t" style="left:1191.7px;top:187.4px;font-size:12.2px;color:#d2d6dc">変数値</div>
<div class="abs" style="left:1113.3px;top:207.1px;width:292.4px;height:22px;border:1px solid #8794a6;border-radius:11px"></div>
<div class="abs" style="left:1015px;top:238.5px;width:400px;height:1px;background:rgba(80,100,130,0.28)"></div>
<div class="t mono" style="left:1024.4px;top:248.0px;font-size:11px;color:#ccd0d8">preload</div><svg class="abs" style="left:1076.3px;top:245.7px" width="12" height="12" viewBox="0 0 12 12"><circle cx="6" cy="6" r="5.4" fill="none" stroke="#d0d4da" stroke-width="1.1"/><text x="6" y="9.6" font-family="Liberation Sans" font-size="10" fill="#d0d4da" text-anchor="middle">?</text></svg>
<svg class="abs" style="left:1112.7px;top:245.5px" width="12" height="12" viewBox="0 0 12 12"><circle cx="6" cy="6" r="5.6" fill="#1a73e8"/><circle cx="6" cy="6" r="4.1" fill="#fff"/><circle cx="6" cy="6" r="2.9" fill="#1a73e8"/></svg><div class="t" style="left:1130.3px;top:245.5px;font-size:12.2px;color:#d2d6dc">固定値</div><svg class="abs" style="left:1174.3px;top:245.5px" width="12" height="12" viewBox="0 0 12 12"><circle cx="6" cy="6" r="5.5" fill="#fff"/></svg><div class="t" style="left:1191.7px;top:245.5px;font-size:12.2px;color:#d2d6dc">変数値</div>
<div class="abs" style="left:1113.3px;top:264.6px;width:293.7px;height:25.2px;border:1px solid #8794a6;border-radius:12.6px"></div>
<div class="t mono" style="left:1123.2px;top:273.5px;font-size:11.3px;color:#f4f4f4;-webkit-text-stroke:0.35px #f4f4f4">auto</div>
<svg class="abs" style="left:1384.6px;top:269.7px" width="15" height="15" viewBox="0 0 15 15"><circle cx="7.5" cy="7.5" r="7.3" fill="#fff"/><path d="M3.8 5.6 H11.2 L7.5 10.4Z" fill="#111"/></svg>
<div class="abs" style="left:1015px;top:299.2px;width:400px;height:1px;background:rgba(80,100,130,0.28)"></div>
<div class="t mono" style="left:1024.4px;top:308.5px;font-size:11px;color:#ccd0d8">autoplay</div><svg class="abs" style="left:1083.3px;top:306.2px" width="12" height="12" viewBox="0 0 12 12"><circle cx="6" cy="6" r="5.4" fill="none" stroke="#d0d4da" stroke-width="1.1"/><text x="6" y="9.6" font-family="Liberation Sans" font-size="10" fill="#d0d4da" text-anchor="middle">?</text></svg>
<svg class="abs" style="left:1112.7px;top:306.5px" width="12" height="12" viewBox="0 0 12 12"><circle cx="6" cy="6" r="5.6" fill="#1a73e8"/><circle cx="6" cy="6" r="4.1" fill="#fff"/><circle cx="6" cy="6" r="2.9" fill="#1a73e8"/></svg><div class="t" style="left:1130.3px;top:306.5px;font-size:12.2px;color:#d2d6dc">固定値</div><svg class="abs" style="left:1174.3px;top:306.5px" width="12" height="12" viewBox="0 0 12 12"><circle cx="6" cy="6" r="5.5" fill="#fff"/></svg><div class="t" style="left:1191.7px;top:306.5px;font-size:12.2px;color:#d2d6dc">変数値</div>
<div class="abs" style="left:1113.8px;top:328.8px;width:10.4px;height:10.4px;background:#fff;border-radius:1px"></div>
<div class="t mono" style="left:1024.4px;top:362.0px;font-size:11px;color:#ccd0d8">loop</div><svg class="abs" style="left:1057.7px;top:359.7px" width="12" height="12" viewBox="0 0 12 12"><circle cx="6" cy="6" r="5.4" fill="none" stroke="#d0d4da" stroke-width="1.1"/><text x="6" y="9.6" font-family="Liberation Sans" font-size="10" fill="#d0d4da" text-anchor="middle">?</text></svg>
<svg class="abs" style="left:1112.7px;top:360.0px" width="12" height="12" viewBox="0 0 12 12"><circle cx="6" cy="6" r="5.6" fill="#1a73e8"/><circle cx="6" cy="6" r="4.1" fill="#fff"/><circle cx="6" cy="6" r="2.9" fill="#1a73e8"/></svg><div class="t" style="left:1130.3px;top:360.0px;font-size:12.2px;color:#d2d6dc">固定値</div><svg class="abs" style="left:1174.3px;top:360.0px" width="12" height="12" viewBox="0 0 12 12"><circle cx="6" cy="6" r="5.5" fill="#fff"/></svg><div class="t" style="left:1191.7px;top:360.0px;font-size:12.2px;color:#d2d6dc">変数値</div>
<div class="abs" style="left:1113.8px;top:382.3px;width:10.4px;height:10.4px;background:#fff;border-radius:1px"></div>
<div class="t mono" style="left:1024.4px;top:415.5px;font-size:11px;color:#ccd0d8">muted</div><svg class="abs" style="left:1064.2px;top:413.2px" width="12" height="12" viewBox="0 0 12 12"><circle cx="6" cy="6" r="5.4" fill="none" stroke="#d0d4da" stroke-width="1.1"/><text x="6" y="9.6" font-family="Liberation Sans" font-size="10" fill="#d0d4da" text-anchor="middle">?</text></svg>
<svg class="abs" style="left:1112.7px;top:413.5px" width="12" height="12" viewBox="0 0 12 12"><circle cx="6" cy="6" r="5.6" fill="#1a73e8"/><circle cx="6" cy="6" r="4.1" fill="#fff"/><circle cx="6" cy="6" r="2.9" fill="#1a73e8"/></svg><div class="t" style="left:1130.3px;top:413.5px;font-size:12.2px;color:#d2d6dc">固定値</div><svg class="abs" style="left:1174.3px;top:413.5px" width="12" height="12" viewBox="0 0 12 12"><circle cx="6" cy="6" r="5.5" fill="#fff"/></svg><div class="t" style="left:1191.7px;top:413.5px;font-size:12.2px;color:#d2d6dc">変数値</div>
<div class="abs" style="left:1113.8px;top:436.3px;width:10.4px;height:10.4px;background:#fff;border-radius:1px"></div>
<div class="t mono" style="left:1024.4px;top:469.2px;font-size:11px;color:#ccd0d8">controls</div><svg class="abs" style="left:1083.3px;top:466.9px" width="12" height="12" viewBox="0 0 12 12"><circle cx="6" cy="6" r="5.4" fill="none" stroke="#d0d4da" stroke-width="1.1"/><text x="6" y="9.6" font-family="Liberation Sans" font-size="10" fill="#d0d4da" text-anchor="middle">?</text></svg>
<svg class="abs" style="left:1112.7px;top:467.2px" width="12" height="12" viewBox="0 0 12 12"><circle cx="6" cy="6" r="5.6" fill="#1a73e8"/><circle cx="6" cy="6" r="4.1" fill="#fff"/><circle cx="6" cy="6" r="2.9" fill="#1a73e8"/></svg><div class="t" style="left:1130.3px;top:467.2px;font-size:12.2px;color:#d2d6dc">固定値</div><svg class="abs" style="left:1174.3px;top:467.2px" width="12" height="12" viewBox="0 0 12 12"><circle cx="6" cy="6" r="5.5" fill="#fff"/></svg><div class="t" style="left:1191.7px;top:467.2px;font-size:12.2px;color:#d2d6dc">変数値</div>
<svg class="abs" style="left:1113.5px;top:490.0px" width="11" height="11" viewBox="0 0 11 11"><rect x="0.2" y="0.2" width="10.4" height="10.4" rx="1.5" fill="#1a73e8"/><path d="M2.4 5.4 L4.4 7.5 L8.4 2.9" fill="none" stroke="#fff" stroke-width="1.5"/></svg>
<div class="abs" style="left:1015px;top:353.7px;width:400px;height:1px;background:rgba(80,100,130,0.28)"></div>
<div class="abs" style="left:1015px;top:407.3px;width:400px;height:1px;background:rgba(80,100,130,0.28)"></div>
<div class="abs" style="left:1015px;top:460.8px;width:400px;height:1px;background:rgba(80,100,130,0.28)"></div>
<div class="abs" style="left:1015px;top:514.5px;width:400px;height:1px;background:rgba(80,100,130,0.28)"></div>
<div class="t mono" style="left:1024.4px;top:526.5px;font-size:11px;color:#ccd0d8">src</div><svg class="abs" style="left:1050.7px;top:524.2px" width="12" height="12" viewBox="0 0 12 12"><circle cx="6" cy="6" r="5.4" fill="none" stroke="#d0d4da" stroke-width="1.1"/><text x="6" y="9.6" font-family="Liberation Sans" font-size="10" fill="#d0d4da" text-anchor="middle">?</text></svg>
<div class="abs" style="left:1113.3px;top:520px;width:292px;height:22px;border:1px solid #8794a6;border-radius:11px"></div>
<div class="t" style="left:1027.6px;top:552.8px;font-size:13px;letter-spacing:-0.45px;color:#e41a40">値を入力してください。</div>
<div class="abs" style="left:1015px;top:579.7px;width:400px;height:27.1px;background:#76365e"></div>
<svg class="abs" style="left:1019.8px;top:585.8px" width="15" height="15" viewBox="0 0 15 15"><circle cx="7.5" cy="7.5" r="6.5" fill="none" stroke="#fff" stroke-width="1.5"/><path d="M4.5 5.7 L10.5 5.7 L7.5 10.5Z" fill="#fff"/></svg>
<div class="t" style="left:1041px;top:586.5px;font-size:13px;color:#e0dce0">共通</div>
<div class="t mono" style="left:1024.4px;top:619.1px;font-size:11px;color:#ccd0d8">ID</div><svg class="abs" style="left:1043.2px;top:616.8000000000001px" width="12" height="12" viewBox="0 0 12 12"><circle cx="6" cy="6" r="5.4" fill="none" stroke="#d0d4da" stroke-width="1.1"/><text x="6" y="9.6" font-family="Liberation Sans" font-size="10" fill="#d0d4da" text-anchor="middle">?</text></svg>
<div class="abs" style="left:1113.3px;top:613px;width:292px;height:22px;border:1px solid #8794a6;border-radius:11px"></div>
<div class="t mono" style="left:1123.8px;top:618.8px;font-size:11.3px;color:#f4f4f4;-webkit-text-stroke:0.35px #f4f4f4">im-element-25</div>
<div class="abs" style="left:1015px;top:645.2px;width:400px;height:1px;background:rgba(80,100,130,0.28)"></div>
<div class="t" style="left:1024.6px;top:652px;font-size:13px;color:#c8ccd2">表示/非表示</div>
<svg class="abs" style="left:1024.5px;top:669.9px" width="12" height="12" viewBox="0 0 12 12"><circle cx="6" cy="6" r="5.4" fill="none" stroke="#d0d4da" stroke-width="1.1"/><text x="6" y="9.6" font-family="Liberation Sans" font-size="10" fill="#d0d4da" text-anchor="middle">?</text></svg>
<svg class="abs" style="left:1112.7px;top:652.2px" width="12" height="12" viewBox="0 0 12 12"><circle cx="6" cy="6" r="5.6" fill="#1a73e8"/><circle cx="6" cy="6" r="4.1" fill="#fff"/><circle cx="6" cy="6" r="2.9" fill="#1a73e8"/></svg><div class="t" style="left:1130.3px;top:652.2px;font-size:12.2px;color:#d2d6dc">固定値</div><svg class="abs" style="left:1174.3px;top:652.2px" width="12" height="12" viewBox="0 0 12 12"><circle cx="6" cy="6" r="5.5" fill="#fff"/></svg><div class="t" style="left:1191.7px;top:652.2px;font-size:12.2px;color:#d2d6dc">変数値</div>
<svg class="abs" style="left:1113.5px;top:674.3px" width="11" height="11" viewBox="0 0 11 11"><rect x="0.2" y="0.2" width="10.4" height="10.4" rx="1.5" fill="#1a73e8"/><path d="M2.4 5.4 L4.4 7.5 L8.4 2.9" fill="none" stroke="#fff" stroke-width="1.5"/></svg>
<div class="abs" style="left:1415px;top:90px;width:7.5px;height:596px;background:#15202d"></div>
<div class="abs" style="left:1415px;top:90px;width:7.5px;height:299.5px;background:#3c4958"></div>
<div class="abs" style="left:1422.5px;top:0;width:2.5px;height:686px;background:#e8eaee"></div>
<div class="abs" style="left:1007.5px;top:375.7px;width:1px;height:20px;background:#3a4a70"></div>
<div class="abs" style="left:1010px;top:375.7px;width:1px;height:20px;background:#3a4a70"></div>
<svg class="abs" style="left:1371px;top:0" width="23" height="21" viewBox="0 0 23 21"><defs><clipPath id="cc"><circle cx="11.4" cy="9.6" r="10.4"/></clipPath></defs><circle cx="11.4" cy="9.6" r="10.4" fill="#8cb6ee"/><g clip-path="url(#cc)"><path d="M2 22 Q3 15 11.4 15 Q19.8 15 20.8 22Z" fill="#2d3340"/><path d="M9.5 15 H13.3 L12.6 22 H10.2Z" fill="#fff"/><path d="M11 15.5 H11.8 L12.2 21 H10.6Z" fill="#3050c0"/><ellipse cx="11.3" cy="10.2" rx="6" ry="6.2" fill="#eab878"/><path d="M5.2 9.4 Q4.6 1.4 11.3 1.2 Q18 1.4 17.4 9.4 Q16.2 4.6 11.3 5 Q6.4 4.6 5.2 9.4Z" fill="#4a3520"/></g></svg>
<svg class="abs" style="left:1402px;top:0" width="19" height="20" viewBox="0 0 19 20"><path d="M8 9 V5 A4.6 4.6 0 0 1 17.2 5 V6.5" fill="none" stroke="#777" stroke-width="2.2"/><rect x="1" y="8.8" width="16.6" height="10.6" rx="1.5" fill="#777"/><circle cx="9.3" cy="12.8" r="1.6" fill="#3b3470"/><rect x="8.6" y="13" width="1.4" height="3.6" fill="#3b3470"/></svg>
<svg class="abs" style="left:0;top:0" width="1425" height="686" viewBox="0 0 1425 686">
<rect x="4.2" y="575.3" width="140" height="54.5" rx="4" fill="none" stroke="#fff" stroke-width="5.6"/>
<rect x="4.2" y="575.3" width="140" height="54.5" rx="4" fill="none" stroke="#f00" stroke-width="3.2"/>
<path d="M148.7 605.8 Q200 565 267 552.6 M252.2 547.5 L267.5 552.6 L253.7 563.2" fill="none" stroke="#fff" stroke-width="4.6" stroke-linejoin="round" stroke-linecap="round" opacity="0.7"/>
<path d="M148.7 605.8 Q200 565 267 552.6 M252.2 547.5 L267.5 552.6 L253.7 563.2" fill="none" stroke="#e8442a" stroke-width="3" stroke-linejoin="round" stroke-linecap="round"/>
<circle cx="211.2" cy="596.6" r="18.6" fill="#e9442a" stroke="#fff" stroke-width="1.6"/>
<text x="211.2" y="607.2" font-family="Liberation Sans" font-size="29" fill="#fff" text-anchor="middle">1</text>
<rect x="1109" y="518" width="296.5" height="25.5" rx="12.75" fill="none" stroke="#fff" stroke-width="7"/>
<rect x="1109" y="518" width="296.5" height="25.5" rx="12.75" fill="none" stroke="#f00" stroke-width="3.2"/>
<rect x="1109" y="611.9" width="296.5" height="25.1" rx="12.5" fill="none" stroke="#fff" stroke-width="7"/>
<rect x="1109" y="611.9" width="296.5" height="25.1" rx="12.5" fill="none" stroke="#f00" stroke-width="3.2"/>
<circle cx="1395.5" cy="488.8" r="19.2" fill="#e9442a" stroke="#fff" stroke-width="2"/>
<text x="1395.5" y="500" font-family="Liberation Sans" font-size="30" fill="#fff" text-anchor="middle">2</text>
<circle cx="1396" cy="661.7" r="19" fill="#e9442a" stroke="#fff" stroke-width="2"/>
<text x="1396" y="672.6" font-family="Liberation Sans" font-size="30" fill="#fff" text-anchor="middle">3</text>
</svg>
</body></html>
